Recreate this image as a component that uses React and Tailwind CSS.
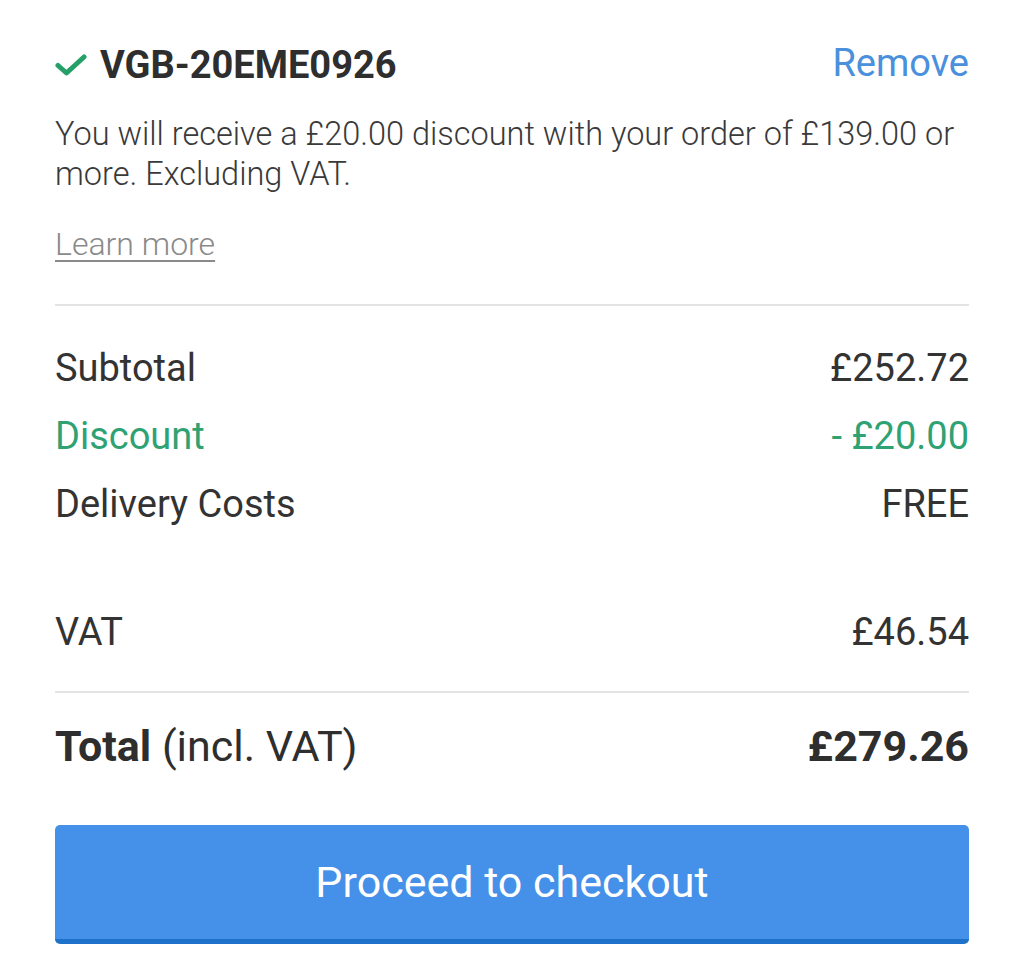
export default function App() {
  const rows = [
    { label: 'Subtotal', value: '£252.72', tone: 'text-[#333333]' },
    { label: 'Discount', value: '- £20.00', tone: 'text-[#2fa274]' },
    { label: 'Delivery Costs', value: 'FREE', tone: 'text-[#333333]' },
  ];

  return (
    <div className="min-h-[955px] bg-white px-[55px] pt-[39px] font-['Roboto',sans-serif] text-[#333333]">
      {/* Voucher code */}
      <div className="flex items-baseline justify-between">
        <div className="flex items-center gap-[13px]">
          <svg width="32" height="22" viewBox="0 0 32 22" className="shrink-0">
            <path d="M3 11.5 L11.5 19 L29 3" fill="none" stroke="#26a069" strokeWidth="5" strokeLinecap="round" strokeLinejoin="round" />
          </svg>
          <span className="text-[38px] leading-[48px] font-bold text-[#2e2e2e]">VGB-20EME0926</span>
        </div>
        <button className="text-[38px] leading-[48px] text-[#4a90dc]">Remove</button>
      </div>

      <p className="mt-[25px] text-[32.5px] leading-[40px] font-light text-[#3a3a3a]">
        You will receive a £20.00 discount with your order of £139.00 or more. Excluding VAT.
      </p>

      <a href="#" className="mt-[30px] block w-fit text-[32px] leading-[40px] font-light text-[#8a8a8a] underline decoration-[2px] underline-offset-[5px]">
        Learn more
      </a>

      <div className="mt-[40px] h-[2px] bg-[#e3e3e3]" />

      {/* Totals */}
      <div className="mt-[28px]">
        {rows.map((r) => (
          <div key={r.label} className={`flex justify-between text-[38px] leading-[68px] ${r.tone}`}>
            <span>{r.label}</span>
            <span>{r.value}</span>
          </div>
        ))}
        <div className="mt-[60px] flex justify-between text-[38px] leading-[68px]">
          <span>VAT</span>
          <span>£46.54</span>
        </div>
      </div>

      <div className="mt-[25px] h-[2px] bg-[#e3e3e3]" />

      <div className="mt-[29px] flex justify-between text-[43px] leading-[48px] text-[#2e2e2e]">
        <span>
          <span className="font-bold">Total</span> (incl. VAT)
        </span>
        <span className="font-bold">£279.26</span>
      </div>

      <button className="mt-[55px] flex h-[119px] w-full items-center justify-center rounded-[5px] border-b-[5px] border-[#1f72c9] bg-[#4590e8] text-[43px] text-white">
        Proceed to checkout
      </button>
    </div>
  );
}
